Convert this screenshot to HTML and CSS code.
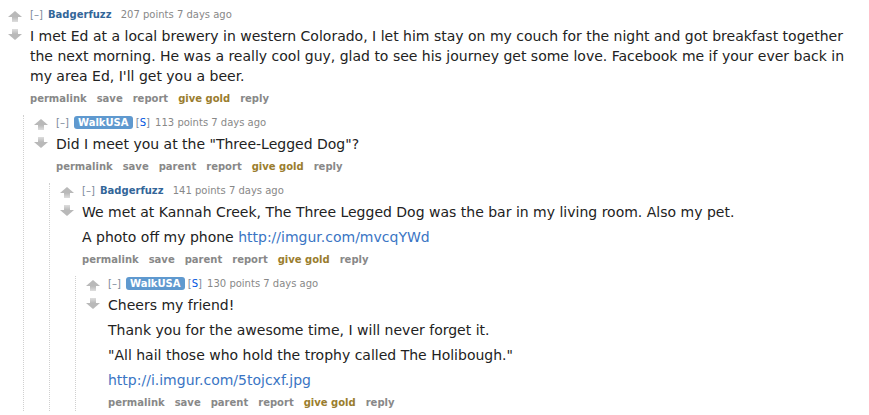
FILE: index.html
```html
<!DOCTYPE html>
<html>
<head>
<meta charset="utf-8">
<title>Comments</title>
<link rel="stylesheet" href="styles.css">
</head>
<body>
<svg class="defs" width="0" height="0" aria-hidden="true">
  <defs>
    <linearGradient id="fadeDown" x1="0" y1="0" x2="0" y2="1">
      <stop offset="0" stop-color="#b9b9b9"/>
      <stop offset="1" stop-color="#dedede"/>
    </linearGradient>
    <linearGradient id="fadeUp" x1="0" y1="1" x2="0" y2="0">
      <stop offset="0" stop-color="#b9b9b9"/>
      <stop offset="1" stop-color="#dedede"/>
    </linearGradient>
  </defs>
</svg>
<div class="thread">
  <div class="comment">
    <div class="row">
      <div class="midcol">
        <svg class="arrow up" viewBox="0 0 14 11"><polygon points="7,0 14,6 0,6" fill="#b9b9b9"/><rect x="4" y="6" width="6" height="5" fill="url(#fadeDown)"/></svg>
        <svg class="arrow down" viewBox="0 0 14 11"><rect x="4" y="0" width="6" height="5" fill="url(#fadeUp)"/><polygon points="0,5 14,5 7,11" fill="#b9b9b9"/></svg>
      </div>
      <div class="entry">
        <p class="tagline"><span class="expand">[–]</span> <span class="author">Badgerfuzz</span> <span class="score">207 points</span> <span class="time">7 days ago</span></p>
        <div class="md">
          <p>I met Ed at a local brewery in western Colorado, I let him stay on my couch for the night and got breakfast together the next morning. He was a really cool guy, glad to see his journey get some love. Facebook me if your ever back in my area Ed, I'll get you a beer.</p>
        </div>
        <ul class="buttons">
          <li>permalink</li><li>save</li><li>report</li><li class="gold">give gold</li><li>reply</li>
        </ul>
      </div>
    </div>
    <div class="child">
      <div class="comment">
        <div class="row">
          <div class="midcol">
            <svg class="arrow up" viewBox="0 0 14 11"><polygon points="7,0 14,6 0,6" fill="#b9b9b9"/><rect x="4" y="6" width="6" height="5" fill="url(#fadeDown)"/></svg>
            <svg class="arrow down" viewBox="0 0 14 11"><rect x="4" y="0" width="6" height="5" fill="url(#fadeUp)"/><polygon points="0,5 14,5 7,11" fill="#b9b9b9"/></svg>
          </div>
          <div class="entry">
            <p class="tagline"><span class="expand">[–]</span> <span class="submitter">WalkUSA</span> <span class="flair">[<span class="s">S</span>]</span> <span class="score">113 points</span> <span class="time">7 days ago</span></p>
            <div class="md">
              <p>Did I meet you at the "Three-Legged Dog"?</p>
            </div>
            <ul class="buttons">
              <li>permalink</li><li>save</li><li>parent</li><li>report</li><li class="gold">give gold</li><li>reply</li>
            </ul>
          </div>
        </div>
        <div class="child">
          <div class="comment">
            <div class="row">
              <div class="midcol">
                <svg class="arrow up" viewBox="0 0 14 11"><polygon points="7,0 14,6 0,6" fill="#b9b9b9"/><rect x="4" y="6" width="6" height="5" fill="url(#fadeDown)"/></svg>
                <svg class="arrow down" viewBox="0 0 14 11"><rect x="4" y="0" width="6" height="5" fill="url(#fadeUp)"/><polygon points="0,5 14,5 7,11" fill="#b9b9b9"/></svg>
              </div>
              <div class="entry">
                <p class="tagline"><span class="expand">[–]</span> <span class="author">Badgerfuzz</span> <span class="score">141 points</span> <span class="time">7 days ago</span></p>
                <div class="md">
                  <p>We met at Kannah Creek, The Three Legged Dog was the bar in my living room. Also my pet.</p>
                  <p>A photo off my phone <a href="#">http://imgur.com/mvcqYWd</a></p>
                </div>
                <ul class="buttons">
                  <li>permalink</li><li>save</li><li>parent</li><li>report</li><li class="gold">give gold</li><li>reply</li>
                </ul>
              </div>
            </div>
            <div class="child">
              <div class="comment">
                <div class="row">
                  <div class="midcol">
                    <svg class="arrow up" viewBox="0 0 14 11"><polygon points="7,0 14,6 0,6" fill="#b9b9b9"/><rect x="4" y="6" width="6" height="5" fill="url(#fadeDown)"/></svg>
                    <svg class="arrow down" viewBox="0 0 14 11"><rect x="4" y="0" width="6" height="5" fill="url(#fadeUp)"/><polygon points="0,5 14,5 7,11" fill="#b9b9b9"/></svg>
                  </div>
                  <div class="entry">
                    <p class="tagline"><span class="expand">[–]</span> <span class="submitter">WalkUSA</span> <span class="flair">[<span class="s">S</span>]</span> <span class="score">130 points</span> <span class="time">7 days ago</span></p>
                    <div class="md">
                      <p>Cheers my friend!</p>
                      <p>Thank you for the awesome time, I will never forget it.</p>
                      <p>"All hail those who hold the trophy called The Holibough."</p>
                      <p><a href="#">http://i.imgur.com/5tojcxf.jpg</a></p>
                    </div>
                    <ul class="buttons">
                      <li>permalink</li><li>save</li><li>parent</li><li>report</li><li class="gold">give gold</li><li>reply</li>
                    </ul>
                  </div>
                </div>
              </div>
            </div>
          </div>
        </div>
      </div>
    </div>
  </div>
</div>
</body>
</html>
```

FILE: styles.css
```css
html, body {
  margin: 0;
  padding: 0;
  background: #ffffff;
}

body {
  font-family: "DejaVu Sans", Verdana, sans-serif;
  color: #222222;
  overflow: hidden;
}

.defs {
  position: absolute;
  width: 0;
  height: 0;
}

.thread {
  padding: 7px 12px 0 0;
}

.row {
  display: flex;
}

.midcol {
  flex: none;
  width: 14px;
  margin: 0 8px 0 8px;
  display: flex;
  flex-direction: column;
}

.arrow {
  display: block;
  width: 14px;
  height: 11px;
}

.arrow.up {
  margin-top: 4px;
}

.arrow.down {
  margin-top: 7px;
}

.entry {
  flex: 1;
  min-width: 0;
}

.tagline {
  margin: 0;
  font-size: 10px;
  line-height: 16px;
  color: #888888;
  white-space: nowrap;
}

.expand {
  color: #7d8a9b;
  margin-right: 2px;
}

.author {
  color: #336699;
  font-weight: bold;
  margin-right: 6px;
}

.submitter {
  display: inline-block;
  background: #5f99cf;
  color: #ffffff;
  font-weight: bold;
  line-height: 13px;
  padding: 0 4px;
  border-radius: 3px;
}

.flair {
  color: #7d8a9b;
  margin-right: 2px;
}

.flair .s {
  color: #0055df;
}

.md {
  margin-top: 3px;
  font-size: 14px;
  line-height: 20px;
  color: #222222;
}

.md p {
  margin: 0 0 5px;
}

.md a {
  color: #3a75c4;
  text-decoration: none;
}

.buttons {
  list-style: none;
  margin: 5px 0 0;
  padding: 0;
  display: flex;
  gap: 10px;
  font-size: 10px;
  font-weight: bold;
  line-height: 16px;
  color: #888888;
}

.buttons .gold {
  color: #9a7d2e;
}

.child {
  margin-top: 8px;
  margin-left: 23px;
  padding-left: 2px;
  border-left: 1px dotted #d0d0d0;
}
```
